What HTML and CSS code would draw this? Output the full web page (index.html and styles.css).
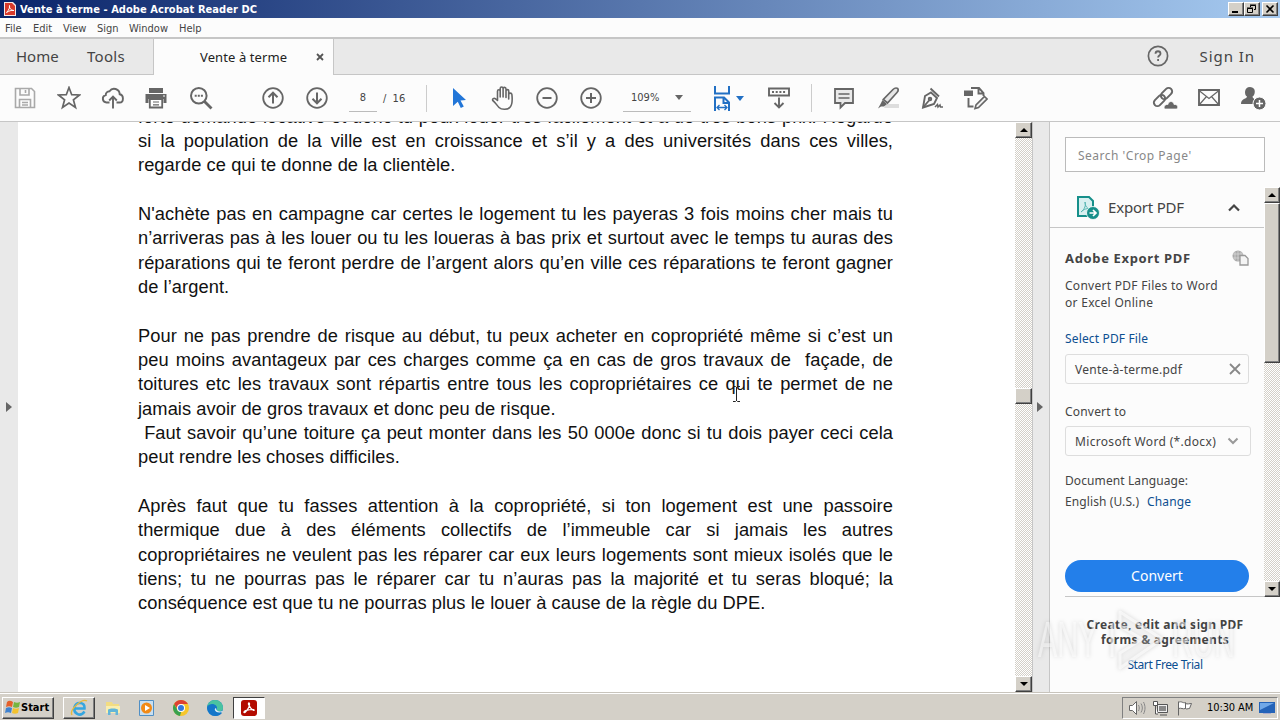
FILE: index.html
```html
<!DOCTYPE html>
<html lang="fr">

<head>
  <meta charset="UTF-8" />
  <title>Vente à terme - Adobe Acrobat Reader DC</title>
  <link rel="stylesheet" href="styles.css">
</head>

<body>
  <!-- Title bar -->
  <header class="titlebar">
    <svg class="app-icon" width="12" height="14" viewBox="0 0 12 14"><path d="M0 0h9l3 3v11H0z" fill="#f8e8e6"/><path d="M1 1h7l3 3v9H1z" fill="#d93a2b"/><path d="M2.500 10.500C5 8 6 5 5.500 3.500 5 6 7 8.500 10 8.500 7 8 5 9 2.500 10.500z" fill="none" stroke="#fff"/></svg>
    <span class="title-text">Vente à terme - Adobe Acrobat Reader DC</span>
    <div class="win-buttons">
      <button class="win-btn"><svg width="12" height="10"><path d="M2 8h6" stroke="#000" stroke-width="2"/></svg></button>
      <button class="win-btn"><svg width="12" height="10"><path d="M4.500 3V1.500h5v4H8M4 1h6M1.500 4.500h5v4h-5zM1 4h6" stroke="#000" fill="none"/></svg></button>
      <button class="win-btn close"><svg width="12" height="10"><path d="M2.500 1.500l7 7M9.500 1.500l-7 7" stroke="#000" stroke-width="1.600"/></svg></button>
    </div>
  </header>

  <nav class="menubar">
    <span class="m-file">File</span><span class="m-edit">Edit</span><span class="m-view">View</span><span class="m-sign">Sign</span><span class="m-window">Window</span><span>Help</span>
  </nav>

  <!-- Tabs -->
  <div class="tabs">
    <div class="tab-left"><span class="home">Home</span><span class="tools">Tools</span></div>
    <div class="tab-active"><span>Vente à terme</span><svg width="8" height="8"><path d="M1 1l6 6M7 1l-6 6" stroke="#555" stroke-width="1.800"/></svg></div>
    <div class="tab-right">
      <svg width="22" height="22" viewBox="0 0 22 22" fill="none" stroke="#666"><circle cx="11" cy="11" r="9.600" stroke-width="1.700"/><path d="M8.500 8.700c0-3.300 5-3.300 5 0 0 1.800-2.400 1.800-2.400 3.800M11.100 14v2" stroke-width="1.800"/></svg>
      <span class="signin">Sign In</span>
    </div>
  </div>

  <!-- Toolbar -->
  <div class="toolbar">
    <span class="tool"><svg width="24" height="24" viewBox="0 0 24 24" fill="none" stroke="#a9a9a9" stroke-width="1.600"><path d="M2.500 2.500h16l3 3v16h-19zM7 2.500v6.500h9V2.500M6.500 21.500v-8h11v8M12.500 4v3M9 16.500h6M9 19h6"/></svg></span>
    <span class="tool"><svg width="24" height="24" viewBox="0 0 24 24" fill="none" stroke="#666" stroke-width="1.700"><path d="M12 1.500l2.700 7.200 7.800.3-6.100 4.800 2.100 7.600-6.500-4.400-6.500 4.400 2.100-7.600L1.500 9l7.800-.3z"/></svg></span>
    <span class="tool"><svg width="24" height="24" viewBox="0 0 24 24" fill="none" stroke="#666" stroke-width="1.900"><path d="M8.500 16.500H5.500a3.700 3.700 0 0 1-.8-7.300 4 4 0 0 1 3.800-4 5.600 5.600 0 0 1 10.200 3c4.400.8 4.200 8.300 0 8.300h-3.200"/><path d="M12 22.500V11M8.200 14.500L12 10.700l3.800 3.800"/></svg></span>
    <span class="tool print"><svg width="24" height="24" viewBox="0 0 24 24"><path d="M5 2h14v5H5zM1.500 8h21v9h-3v-4h-15v4h-3z" fill="#666"/><path d="M5.800 13v8.500h12.400V13z" fill="#fff" stroke="#666" stroke-width="1.800"/><path d="M9 16h6M9 18.800h6" stroke="#666" stroke-width="1.200"/><path d="M19 10h2" stroke="#fff"/></svg></span>
    <span class="tool"><svg width="24" height="24" viewBox="0 0 24 24" fill="none" stroke="#666" stroke-width="2"><circle cx="9.800" cy="9.800" r="7.800"/><path d="M15.500 15.500l7 7" stroke-width="2.800"/><path d="M5.700 9.800h2M8.800 9.800h2M11.900 9.800h2" stroke-width="1.900"/></svg></span>
    <span class="tool up"><svg width="24" height="24" viewBox="0 0 24 24" fill="none" stroke="#666" stroke-width="1.800"><circle cx="12" cy="12" r="9.800"/><path d="M12 17.500V7M7.500 11.200L12 6.700l4.500 4.500" stroke-width="2"/></svg></span>
    <span class="tool"><svg width="24" height="24" viewBox="0 0 24 24" fill="none" stroke="#666" stroke-width="1.800"><circle cx="12" cy="12" r="9.800"/><path d="M12 6.500V17M7.500 12.800l4.500 4.500 4.500-4.500" stroke-width="2"/></svg></span>
    <div class="page-nav"><span class="page-field">8</span><span class="page-total">/  16</span></div>
    <span class="tool select"><svg width="24" height="24" viewBox="0 0 24 24"><path d="M6 2l13 12-5.500.5 3.300 6-3 1.500-3-6.300L6 20z" fill="#2276d8"/></svg></span>
    <span class="tool"><svg width="24" height="26" viewBox="0 0 24 26" fill="none" stroke="#666" stroke-width="1.600" stroke-linecap="round"><path d="M6.500 15V6.300c0-2 2.700-2 2.700 0V12M9.200 7V3.500c0-2 2.900-2 2.900 0V12M12.100 4c0-2.300 2.900-2 2.900 0v8.500M15 6c0-1.900 2.700-1.900 2.700 0v8M17.700 9.500c0-1.900 3-1.900 3.200 0 .7 6.500.5 10-1.700 12.500-2.200 3-8.700 3-11.200.5C5.500 20 4.500 17.500 1.800 15.500c-.8-1.500 1.100-2.700 2.500-1.800l2.200 1.800"/></svg></span>
    <span class="tool"><svg width="24" height="24" viewBox="0 0 24 24" fill="none" stroke="#666" stroke-width="1.800"><circle cx="12" cy="12" r="9.800"/><path d="M7.500 12h9" stroke-width="2"/></svg></span>
    <span class="tool"><svg width="24" height="24" viewBox="0 0 24 24" fill="none" stroke="#666" stroke-width="1.800"><circle cx="12" cy="12" r="9.800"/><path d="M7 12h10M12 7v10" stroke-width="2"/></svg></span>
    <div class="zoom-field"><span>109%</span><i class="caret"></i></div>
    <div class="fit"><svg width="18" height="25" viewBox="0 0 18 25" fill="none" stroke="#2270c4" stroke-width="2"><path d="M2 0v7.500h14V0M2 25V11.500h9l5 5V25M10.500 11.500v5.500H16"/><path d="M4 21.500h10M6.500 19L4 21.500 6.500 24M11.500 19l2.500 2.500-2.500 2.500" stroke-width="1.300"/></svg><i class="caret blue"></i></div>
    <span class="tool"><svg width="24" height="24" viewBox="0 0 24 24" fill="none" stroke="#666" stroke-width="1.900"><path d="M2 2.500h20v7H2z"/><path d="M5 6h14" stroke-dasharray="2 1.700"/><path d="M12 11.500v10M7.500 17l4.500 4.500 4.500-4.500"/></svg></span>
    <i class="sep"></i>
    <span class="tool"><svg width="24" height="24" viewBox="0 0 24 24" fill="#e9e9e9" stroke="#666" stroke-width="1.800"><path d="M3 3h18v14h-8l-4.500 4.500V17H3z"/><path d="M6.500 8h11M6.500 12h11" stroke-width="1.400"/></svg></span>
    <span class="tool"><svg width="24" height="24" viewBox="0 0 24 24"><path d="M10 18h13v4H8z" fill="#ddd"/><path d="M20 2c3 0 2.500 3 1 4.500L11.500 17l-4.200-3.500L17 3.500C18 2.500 19 2 20 2z" fill="#e6e6e6" stroke="#666" stroke-width="1.700"/><path d="M6.500 14l4.500 4-3 2.500H5L2 22.500 4.500 18z" fill="#666"/></svg></span>
    <span class="tool"><svg width="24" height="24" viewBox="0 0 24 24" fill="none" stroke="#666" stroke-width="1.900"><path d="M11 6.500l6 5.500-3 6-11 3.500L5 10z"/><path d="M10.500 2.500l8.500 8M3 21.500l6-7" /><circle cx="10" cy="13" r="1.300"/><path d="M15 21l2.500-2.500.5 2.500 2-2 .5 2H23" stroke-width="1.500"/></svg></span>
    <span class="tool"><svg width="24" height="24" viewBox="0 0 24 24" fill="none" stroke="#666" stroke-width="1.900"><path d="M7 2h8l4.500 5v3M14.500 2v5.500h5M4.500 12v8.500h5"/><path d="M0 4.500h9V10H0z" fill="#666" stroke="none"/><path d="M20.500 10.500l2.500 2.500-8.500 8.500-3.500 1 1-3.500z" fill="#f0f0f0" stroke-width="1.600"/></svg></span>
    <div class="share-tools">
      <span class="tool"><svg width="26" height="24" viewBox="0 0 26 24" fill="none" stroke="#666" stroke-width="2"><rect x="1" y="11" width="13" height="7" rx="3.500" transform="rotate(-45 7.500 14.500)"/><rect x="8" y="4" width="13" height="7" rx="3.500" transform="rotate(-45 14.500 7.500)"/><path d="M12.500 23c-1.500-3 1.500-5 3.500-4.500.5-4 5.500-4 6 0 3.500-.5 4.500 2.500 3 4.500z" fill="#666" stroke="#fcfcfc" stroke-width=".7"/></svg></span>
      <span class="tool"><svg width="24" height="20" viewBox="0 0 24 20" fill="none" stroke="#666"><path d="M2 2h20v15H2z" stroke-width="1.900"/><path d="M2 2.500l10 8 10-8M2.500 16.500l7-8M21.500 16.500l-7-8" stroke-width="1.200"/></svg></span>
      <span class="tool"><svg width="26" height="24" viewBox="0 0 26 24"><path d="M10 1c7 0 5 9 2.500 9.500 0 2.500 4 2 4 7.500H1c0-6 6-5 6-7.500C4 9 4 1 10 1z" fill="#666"/><circle cx="19.500" cy="17.500" r="6.500" fill="#666" stroke="#fcfcfc"/><path d="M19.500 14v7M16 17.500h7" stroke="#fff" stroke-width="1.500"/></svg></span>
    </div>
  </div>

  <main class="workspace">
    <div class="rail left-rail"><i class="arrow"></i></div>

    <!-- Document page -->
    <article class="page">
      <p>
        <span>forte demande locative et donc tu peux louer très facilement et à de très bons prix. Regarde</span>
        <span>si la population de la ville est en croissance et s’il y a des universités dans ces villes,</span>
        <span class="end">regarde ce qui te donne de la clientèle.</span>
      </p>
      <p>
        <span>N'achète pas en campagne car certes le logement tu les payeras 3 fois moins cher mais tu</span>
        <span>n’arriveras pas à les louer ou tu les loueras à bas prix et surtout avec le temps tu auras des</span>
        <span>réparations qui te feront perdre de l’argent alors qu’en ville ces réparations te feront gagner</span>
        <span class="end">de l’argent.</span>
      </p>
      <p>
        <span>Pour ne pas prendre de risque au début, tu peux acheter en copropriété même si c’est un</span>
        <span>peu moins avantageux par ces charges comme ça en cas de gros travaux de &nbsp;façade, de</span>
        <span>toitures etc les travaux sont répartis entre tous les copropriétaires ce qui te permet de ne</span>
        <span class="end">jamais avoir de gros travaux et donc peu de risque.</span>
        <span>&nbsp;Faut savoir qu’une toiture ça peut monter dans les 50 000e donc si tu dois payer ceci cela</span>
        <span class="end">peut rendre les choses difficiles.</span>
      </p>
      <p>
        <span>Après faut que tu fasses attention à la copropriété, si ton logement est une passoire</span>
        <span>thermique due à des éléments collectifs de l’immeuble car si jamais les autres</span>
        <span>copropriétaires ne veulent pas les réparer car eux leurs logements sont mieux isolés que le</span>
        <span>tiens; tu ne pourras pas le réparer car tu n’auras pas la majorité et tu seras bloqué; la</span>
        <span class="end">conséquence est que tu ne pourras plus le louer à cause de la règle du DPE.</span>
      </p>
      <svg class="ibeam" width="9" height="16"><path d="M1 .5h2.500l1 1 1-1H8M4.500 1v14M1 15.500h2.500l1-1 1 1H8" fill="none" stroke="#222"/></svg>
    </article>

    <div class="scrollbar doc-scroll"><i class="sb up"></i><i class="thumb"></i><i class="sb down"></i></div>
    <div class="rail right-rail"><i class="arrow"></i></div>

    <!-- Tools panel -->
    <aside class="panel">
      <div class="search">Search 'Crop Page'</div>
      <div class="panel-body">
        <div class="panel-content">
          <div class="export-head">
            <svg width="24" height="25" viewBox="0 0 24 25"><path d="M2 2h11l4 4v15H2z" fill="#d8f0f0" stroke="#168f8a" stroke-width="2"/><path d="M5 17c4-3 5-7 4-10 0 4 2 7 6 7-4-1-7 0-10 3z" fill="none" stroke="#55b5b1"/><circle cx="17" cy="18" r="6.500" fill="#168f8a" stroke="#fff" stroke-width=".8"/><path d="M13.500 18h6M17 15l3 3-3 3" fill="none" stroke="#fff" stroke-width="1.700"/></svg>
            <span>Export PDF</span>
            <svg class="chev" width="14" height="9"><path d="M2 7.500L7 2.500l5 5" fill="none" stroke="#444" stroke-width="2.200"/></svg>
          </div>
          <div class="export">
            <div class="export-title"><b>Adobe Export PDF</b><svg width="17" height="16" viewBox="0 0 17 16"><circle cx="6" cy="6" r="5.500" fill="#aaa"/><path d="M1 4h10M1 8h10M6 1v10M3 2v8M9 2v8" stroke="#ddd" stroke-width=".7"/><path d="M8 5.500h5l3 3v6.500H8z" fill="#f4f4f4" stroke="#999" stroke-width="1.300"/></svg></div>
            <div class="desc">Convert PDF Files to Word<br>or Excel Online</div>
            <a class="select-file">Select PDF File</a>
            <div class="field file"><span>Vente-à-terme.pdf</span><svg width="12" height="12"><path d="M1 1l10 10M11 1L1 11" stroke="#888" stroke-width="1.800"/></svg></div>
            <div class="label">Convert to</div>
            <div class="field format"><span>Microsoft Word (*.docx)</span><svg width="12" height="8"><path d="M1.500 1.500L6 6l4.500-4.500" fill="none" stroke="#999" stroke-width="2"/></svg></div>
            <div class="lang"><span class="doclang">Document Language:</span><br><span class="english">English (U.S.)</span><a>Change</a></div>
            <button class="convert">Convert</button>
          </div>
        </div>
        <div class="scrollbar panel-scroll"><i class="sb up"></i><i class="thumb"></i><i class="sb down"></i></div>
      </div>
      <div class="promo">
        <b class="promo-one">Create, edit and sign PDF</b>
        <b class="promo-two">forms &amp; agreements</b>
        <a>Start Free Trial</a>
      </div>
      <div class="watermark">
        <span>ANY</span>
        <svg width="58" height="64" viewBox="0 0 58 64" fill="#fff" fill-opacity=".2" stroke="#fff" stroke-opacity=".6" stroke-width="3" stroke-linejoin="round"><path d="M13 4l42 27-42 29V45l22-14-22-13z"/><path d="M5 15v34"/></svg>
        <span>RUN</span>
      </div>
    </aside>
  </main>

  <!-- Taskbar -->
  <footer class="taskbar">
    <button class="start"><svg width="17" height="16" viewBox="0 0 17 16"><path d="M3 2c2-2 4-1 6 0L8 7C6 6 4 6 2 7z" fill="#e5602b"/><path d="M10 2c2 1 4 1 6 0l-1 5c-2 1-4 1-6 0z" fill="#76b540"/><path d="M2 8c2-1 4-1 6 0l-1 5c-2-1-4-1-6 0z" fill="#3f82d0"/><path d="M9 8c2 1 4 1 6 0l-1 5c-2 1-4 1-6 0z" fill="#f3c22e"/></svg>Start</button>
    <span class="task raised"><svg width="18" height="18" viewBox="0 0 18 18" fill="none"><path d="M14.500 12.500C10 19 3 14 4.500 8c2-6 10.500-5 10 1.500H5" stroke="#35a6e0" stroke-width="2.500"/><path d="M2 16C-1 11 12-1 17 2" stroke="#e6b93c" stroke-width="1.400"/></svg></span>
    <span class="task"><svg width="18" height="18" viewBox="0 0 18 18"><path d="M2 3h6l1 2h6v9H2z" fill="#f2dc82"/><path d="M2 7h14v7H2z" fill="#f9eeb0"/><path d="M4 16v-5c0-2 10-2 10 0v5h-2.500v-3h-5v3z" fill="#63b6d8"/></svg></span>
    <span class="task"><svg width="18" height="18" viewBox="0 0 18 18"><path d="M1.500 1.500h14v15h-14z" fill="#c9dff0" stroke="#508fc5"/><circle cx="8.500" cy="9" r="5.500" fill="#f28a16"/><path d="M7 6l5 3-5 3z" fill="#fff"/></svg></span>
    <span class="task"><svg width="18" height="18" viewBox="0 0 18 18"><circle cx="9" cy="9" r="8" fill="#f6c62b"/><path d="M2.100 5a8 8 0 0 1 13.800 0H9L7 12z" fill="#dd4133"/><path d="M2.100 5l4 7 3 1L8 17A8 8 0 0 1 2.100 5z" fill="#38a150"/><circle cx="9" cy="9" r="4" fill="#fff"/><circle cx="9" cy="9" r="3" fill="#3478dc"/></svg></span>
    <span class="task"><svg width="18" height="18" viewBox="0 0 18 18"><circle cx="9" cy="9" r="8" fill="#1680cd"/><path d="M1 9a8 8 0 0 1 16 0c0 4-5 4-6 2 1-5-7-6-10-2z" fill="#4ac3a0"/><path d="M1 8c3-5 10-3 10 1-4-1-5 5 5 5-4 5-14 4-15-6z" fill="#1476c9"/><path d="M10 9c-3 1 0 6 6 4l1-1c-4 1-7 0-7-3z" fill="#e0eef5"/></svg></span>
    <span class="task pressed"><svg width="16" height="16" viewBox="0 0 16 16"><rect width="16" height="16" rx="3" fill="#b30b00"/><path d="M3 12.500C2 11 7 9.500 12.500 9.500c2.500 1.500-1.500 2-5-5C7 2 9 2.500 8.500 5 8 8 4.500 13 3 12.500z" fill="none" stroke="#fff" stroke-width="1.200"/></svg></span>
    <div class="tray">
      <svg width="18" height="16" viewBox="0 0 18 16" fill="#fff" stroke="#666"><path d="M1.500 5.500h3l4-4v13l-4-4h-3z"/><path d="M10.500 5c1 2 1 4 0 6M13 3.500c1.800 3 1.800 6 0 9M15.500 2c2 4 2 8 0 12" fill="none" stroke="#888"/></svg>
      <svg width="18" height="16" viewBox="0 0 18 16" fill="#eee" stroke="#555"><path d="M5.500 4.500h10v8h-10zM8 15h7"/><path d="M7 6h7v5H7z" fill="#888" stroke="none"/><path d="M1.500 1.500h4v4h-4zM3.500 6v8H6" fill="#fff"/></svg>
      <svg width="18" height="16" viewBox="0 0 18 16" fill="#fff" stroke="#666"><path d="M2.500 1.500v14M2.500 2.500c3-2 4 1 7 0v6c-3 1-4-1-7 0zM9.500 3.500c2 1 4 0 6 0l-2 5c-2 0-3 1-4 0z"/></svg>
      <span class="clock">10:30 AM</span>
      <svg width="16" height="14" viewBox="0 0 16 14"><path d="M0 1h16v11H0z" fill="#2463b8"/><path d="M1 2h14L1 9z" fill="#70a8e8"/><path d="M4 12h8v1H4z" fill="#aac"/></svg>
    </div>
  </footer>
</body>

</html>
```
FILE: styles.css
```css
:root {
  --face: #d4d0c8;
  --chrome: #fcfcfc;
  --grey: #e9e9e9;
  --line: #c6c6c6;
  --text: #444;
  --link: #0c4f91;
}

* {
  box-sizing: border-box;
}

body {
  margin: 0;
  width: 1280px;
  height: 720px;
  overflow: hidden;
  display: flex;
  flex-direction: column;
  font-family: "Noto Sans", sans-serif;
  font-size: 12px;
  color: var(--text);
  background: var(--chrome);
}

svg {
  display: block;
  flex: none;
}

button {
  font: inherit;
  padding: 0;
  border: 0;
}

/* title bar and menus */
.titlebar {
  height: 18px;
  flex: none;
  display: flex;
  align-items: center;
  padding: 0 2px 0 4px;
  background: linear-gradient(90deg, #0a246a, #a6caf0);
}

.title-text {
  margin-left: 4px;
  font: bold 11px "DejaVu Sans Condensed", "DejaVu Sans", sans-serif;
  letter-spacing: .06px;
  color: #fff;
  white-space: nowrap;
}

.win-buttons {
  display: flex;
  margin-left: auto;
}

.win-btn,
.sb,
.thumb,
.start,
.raised {
  background: var(--face);
  border: 1px solid;
  border-color: #fff #404040 #404040 #fff;
  box-shadow: inset -1px -1px #808080;
}

.win-btn {
  width: 16px;
  height: 14px;
  display: flex;
  align-items: center;
  justify-content: center;
}

.close {
  margin-left: 2px;
}

.menubar {
  height: 19px;
  flex: none;
  display: flex;
  align-items: center;
  padding: 1px 5px 0;
  font: 11px "DejaVu Sans Condensed", "DejaVu Sans", sans-serif;
}

.m-file { width: 28px; }
.m-edit { width: 30px; }
.m-view { width: 34px; }
.m-sign { width: 32px; }
.m-window { width: 50px; }

/* tabs */
.tabs {
  height: 38px;
  flex: none;
  display: flex;
  border-top: 2px solid var(--line);
}

.tab-left,
.tab-right {
  display: flex;
  align-items: center;
  background: var(--grey);
  border-bottom: 1px solid var(--line);
  padding-bottom: 2px;
  font-size: 15px;
}

.tab-left {
  width: 154px;
  padding-left: 16px;
  border-right: 1px solid var(--line);
}

.home {
  width: 71px;
}

.tools {
  letter-spacing: .3px;
}

.tab-active {
  width: 179px;
  display: flex;
  align-items: center;
  padding: 0 0 1px 46px;
  font-size: 13px;
  color: #222;
}

.tab-active span {
  width: 116px;
  letter-spacing: .1px;
}

.tab-right {
  flex: 1;
  border-left: 1px solid var(--line);
  justify-content: flex-end;
  padding-right: 25px;
}

.signin {
  margin-left: 30px;
  letter-spacing: .95px;
}

/* toolbar */
.toolbar {
  height: 47px;
  flex: none;
  display: flex;
  align-items: center;
  padding-left: 3px;
  border-bottom: 1px solid var(--line);
  font: 11px "DejaVu Sans Condensed", sans-serif;
}

.tool {
  width: 44px;
  flex: none;
  display: flex;
  justify-content: center;
}

.tool.print {
  padding-right: 2px;
}

.up.tool {
  margin-left: 28px;
}

.page-nav {
  width: 88px;
  height: 27px;
  display: flex;
  align-items: center;
  padding-left: 10px;
  border-right: 1px solid #ccc;
}

.page-field {
  width: 28px;
  line-height: 26px;
  border-bottom: 1px solid #bbb;
  text-align: center;
}

.page-total {
  margin-left: 6px;
  white-space: pre;
}

.select {
  margin-left: 10px;
}

.zoom-field {
  width: 68px;
  height: 28px;
  margin: 0 10px;
  padding: 0 8px;
  display: flex;
  align-items: center;
  justify-content: space-between;
  border-bottom: 1px solid #bbb;
}

.caret {
  border: 4px solid transparent;
  border-top: 5px solid #666;
  border-bottom: 0;
}

.blue {
  border-top-color: #2270c4;
}

.fit {
  width: 56px;
  padding-left: 12px;
  display: flex;
  align-items: center;
  gap: 5px;
}

.sep {
  height: 28px;
  margin: 0 10px;
  border-left: 1px solid #ccc;
}

.share-tools {
  display: flex;
  align-items: center;
  margin-left: auto;
  padding-right: 5px;
}

/* workspace */
.workspace {
  height: 570px;
  flex: none;
  display: flex;
}

.rail {
  width: 18px;
  flex: none;
  display: flex;
  align-items: center;
  background: var(--grey);
}

.arrow {
  margin-left: 6px;
  border: 5px solid transparent;
  border-left: 6px solid #666;
  border-right: 0;
}

.right-rail {
  border-right: 1px solid var(--line);
  border-left: 1px solid var(--line);
}

.right-rail .arrow {
  margin-left: 4px;
}

.page {
  position: relative;
  width: 997px;
  overflow: hidden;
  padding: 0 122px 0 120px;
  background: #fff;
  color: #111;
  font: 18.300px/24.350px "Liberation Sans", Arial, sans-serif;
}

.page p {
  margin: 0 0 24.350px;
}

.page p:first-child {
  margin-top: -17.400px;
}

.page span {
  display: block;
  height: 24.350px;
  white-space: nowrap;
  text-align-last: justify;
  letter-spacing: .06px;
}

.page .end {
  text-align-last: left;
}

.ibeam {
  position: absolute;
  left: 714px;
  top: 264px;
}

.scrollbar {
  display: flex;
  flex-direction: column;
  background: repeating-conic-gradient(#fff 0 25%, #d4d0c8 0 50%) 0 0 / 2px 2px;
}

.doc-scroll {
  width: 17px;
  flex: none;
}

.sb {
  height: 16px;
  flex: none;
  display: flex;
  align-items: center;
  justify-content: center;
}

.sb::after {
  content: "";
  border: 4px solid transparent;
}

.sb.up::after {
  border-top: 0;
  border-bottom-color: #000;
}

.sb.down::after {
  border-bottom: 0;
  border-top-color: #000;
}

.sb.down {
  margin-top: auto;
}

.doc-scroll .thumb {
  height: 16px;
  margin-top: 250px;
}

/* tools panel */
.panel {
  position: relative;
  width: 230px;
}

.search {
  width: 200px;
  height: 35px;
  margin: 15px 0 0 15px;
  padding-left: 12px;
  line-height: 35px;
  border: 1px solid #bbb;
  background: #fff;
  color: #888;
  letter-spacing: .5px;
}

.panel-body {
  height: 410px;
  margin-top: 15px;
  display: flex;
}

.panel-content {
  width: 214px;
}

.panel-scroll {
  width: 16px;
}

.panel-scroll .thumb {
  height: 160px;
}

.export-head {
  height: 41px;
  display: flex;
  align-items: center;
  padding-left: 26px;
  border-bottom: 1px solid var(--line);
  font-size: 15px;
}

.export-head span {
  width: 119px;
  margin-left: 8px;
  letter-spacing: -.2px;
}

.export {
  height: 369px;
  margin-left: 15px;
  padding-top: 20px;
  border-bottom: 1px solid var(--line);
}

.export-title {
  width: 184px;
  height: 20px;
  display: flex;
  align-items: center;
  justify-content: space-between;
  font-size: 13px;
  letter-spacing: .65px;
}

.desc {
  margin-top: 9px;
  line-height: 17px;
  letter-spacing: .28px;
}

a {
  color: var(--link);
}

.select-file {
  display: block;
  margin-top: 19px;
  line-height: 17px;
  letter-spacing: .15px;
}

.field {
  width: 184px;
  height: 30px;
  display: flex;
  align-items: center;
  justify-content: space-between;
  padding: 0 7px 0 9px;
  border: 1px solid #ddd;
  border-radius: 3px;
}

.file {
  margin-top: 7px;
  letter-spacing: .25px;
}

.label {
  margin-top: 19px;
  line-height: 17px;
  letter-spacing: .2px;
}

.format {
  width: 186px;
  margin-top: 6px;
  padding-right: 11px;
  letter-spacing: .33px;
}

.lang {
  margin-top: 14px;
  line-height: 21px;
  letter-spacing: .1px;
}

.english {
  margin-right: 8px;
}

.convert {
  display: block;
  width: 184px;
  height: 32px;
  margin-top: 48px;
  padding-bottom: 1px;
  border-radius: 16px;
  background: #237fea;
  color: #fff;
  font-size: 14px;
}

.promo {
  height: 95px;
  display: flex;
  flex-direction: column;
  align-items: center;
  padding-top: 20px;
  line-height: 15px;
}

.promo b {
  letter-spacing: .3px;
}

.promo a {
  margin-top: 10px;
  letter-spacing: -.4px;
}

/* faint recorder logo over the corner of the panel */
.watermark {
  position: absolute;
  left: -12px;
  top: 486px;
  width: 196px;
  display: flex;
  align-items: center;
  justify-content: space-between;
  font: 50px/64px "Liberation Sans", sans-serif;
  color: rgba(255, 255, 255, .5);
  filter: drop-shadow(0 0 2px rgba(0, 0, 0, .25));
}

.watermark span {
  width: 62px;
  transform: scaleX(.58);
  transform-origin: left;
}

/* taskbar */
.taskbar {
  height: 28px;
  flex: none;
  display: flex;
  align-items: center;
  padding: 3px 2px 1px;
  background: var(--face);
  border-top: 1px solid #c8c4bc;
  box-shadow: inset 0 1px #fff;
  color: #000;
}

.start {
  width: 52px;
  height: 22px;
  margin-right: 9px;
  display: flex;
  align-items: center;
  padding-left: 1px;
  font: bold 11px "DejaVu Sans Condensed", sans-serif;
}

.task {
  width: 32px;
  height: 22px;
  margin-right: 2px;
  display: flex;
  align-items: center;
  justify-content: center;
}

.pressed {
  background: #fff;
  border: 1px solid;
  border-color: #404040 #fff #fff #404040;
}

.tray {
  width: 156px;
  height: 22px;
  margin-left: auto;
  display: flex;
  align-items: center;
  gap: 6px;
  padding-left: 5px;
  border: 1px solid;
  border-color: #808080 #fff #fff #808080;
  font: 11px "DejaVu Sans Condensed", sans-serif;
}

.clock {
  margin-left: 7px;
  white-space: nowrap;
  letter-spacing: -.1px;
}
```
